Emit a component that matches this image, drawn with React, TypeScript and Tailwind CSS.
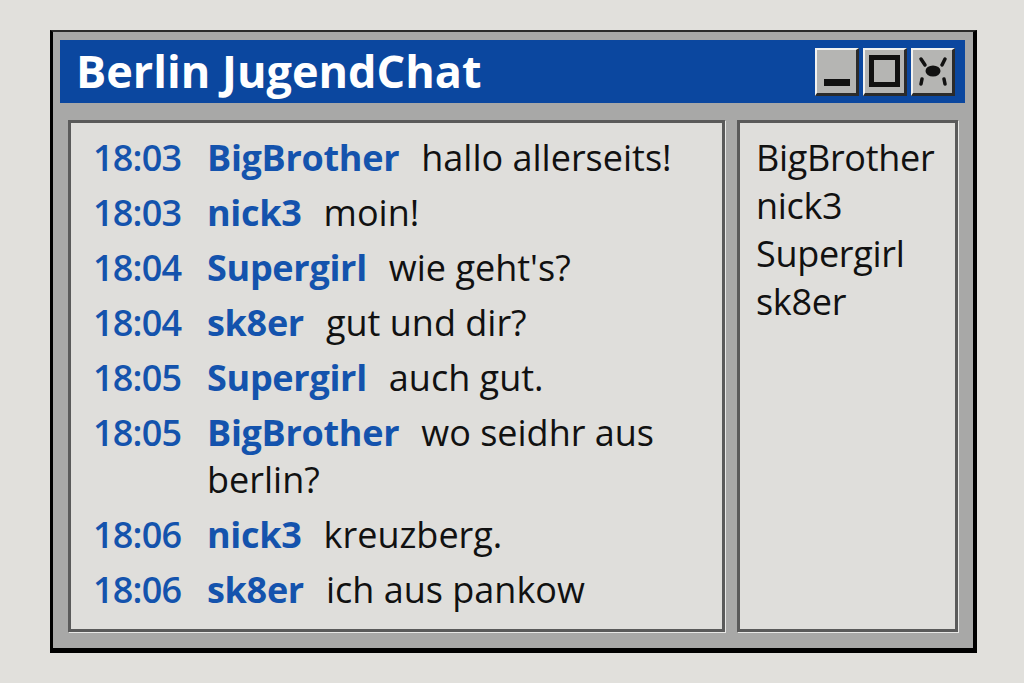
import React from 'react';

type Msg = { time: string; nick: string; text: string };

const messages: Msg[] = [
  { time: '18:03', nick: 'BigBrother', text: 'hallo allerseits!' },
  { time: '18:03', nick: 'nick3', text: 'moin!' },
  { time: '18:04', nick: 'Supergirl', text: "wie geht's?" },
  { time: '18:04', nick: 'sk8er', text: 'gut und dir?' },
  { time: '18:05', nick: 'Supergirl', text: 'auch gut.' },
  { time: '18:05', nick: 'BigBrother', text: 'wo seidhr aus berlin?' },
  { time: '18:06', nick: 'nick3', text: 'kreuzberg.' },
  { time: '18:06', nick: 'sk8er', text: 'ich aus pankow' },
];

const users = ['BigBrother', 'nick3', 'Supergirl', 'sk8er'];

function TitleButton({ children }: { children: React.ReactNode }) {
  return (
    <div className="w-[44px] h-[48px] bg-[#b5b5b3] border-t-2 border-l-2 border-t-[#f2f2f0] border-l-[#f2f2f0] border-b-[3px] border-r-[3px] border-b-[#2b2b2b] border-r-[#2b2b2b] flex items-center justify-center">
      {children}
    </div>
  );
}

export default function App() {
  return (
    <div
      className="w-[1024px] h-[683px] bg-[#e1e0dc] pl-[50px] pt-[30px]"
      style={{ fontFamily: '"Open Sans", "DejaVu Sans", sans-serif' }}
    >
      <div className="w-[927px] h-[623px] bg-[#a8a8a7] border-l-[3px] border-t-2 border-r-[4px] border-b-[5px] border-l-black border-t-[#2a2a2a] border-r-black border-b-black flex flex-col">
        {/* title bar */}
        <div className="mx-[7px] mt-[8px] mr-[8px] h-[63px] bg-[#0b479f] flex items-center justify-between pl-[16px] pr-[10px]">
          <h1 className="text-white font-bold text-[45px] leading-none -mt-[2px]">Berlin JugendChat</h1>
          <div className="flex gap-[4px]">
            <TitleButton>
              <div className="w-[26px] h-[7px] bg-[#111] mt-[22px]" />
            </TitleButton>
            <TitleButton>
              <div className="w-[31px] h-[32px] border-[5px] border-[#111]" />
            </TitleButton>
            <TitleButton>
              <svg width="30" height="30" viewBox="0 0 30 30">
                <g stroke="#111" strokeWidth="3.5" strokeLinecap="round" fill="none">
                  <path d="M3 3 L7 9" />
                  <path d="M27 3 L24 9" />
                  <path d="M4 23 L3 28" />
                  <path d="M26 23 L27 28" />
                </g>
                <ellipse cx="15" cy="15" rx="7.5" ry="5.5" fill="#111" />
              </svg>
            </TitleButton>
          </div>
        </div>

        {/* panels */}
        <div className="flex-1 flex gap-[12px] px-[15px] pt-[17px] pb-[16px]">
          <div className="w-[657px] bg-[#dfdedb] border-[3px] border-[#5a5a5a] shadow-[1px_1px_0_#e8e8e6] pl-[22px] pr-[18px] pt-[11px] flex flex-col gap-[8px]">
            {messages.map((m, i) => (
              <div key={i} className="flex text-[36px] leading-[47px]">
                <span className="w-[114px] shrink-0 text-[#1453ad] font-semibold tracking-[-0.8px]">{m.time}</span>
                <p className="text-[#111]">
                  <span className="text-[#1453ad] font-bold mr-[22px] tracking-[-0.3px]">{m.nick}</span>
                  {m.text}
                </p>
              </div>
            ))}
          </div>
          <div className="flex-1 bg-[#dfdedb] border-[3px] border-[#5a5a5a] shadow-[1px_1px_0_#e8e8e6] pl-[16px] pt-[11px]">
            {users.map((u) => (
              <div key={u} className="text-[36px] leading-[48px] text-[#111] tracking-[-0.3px]">
                {u}
              </div>
            ))}
          </div>
        </div>
      </div>
    </div>
  );
}
